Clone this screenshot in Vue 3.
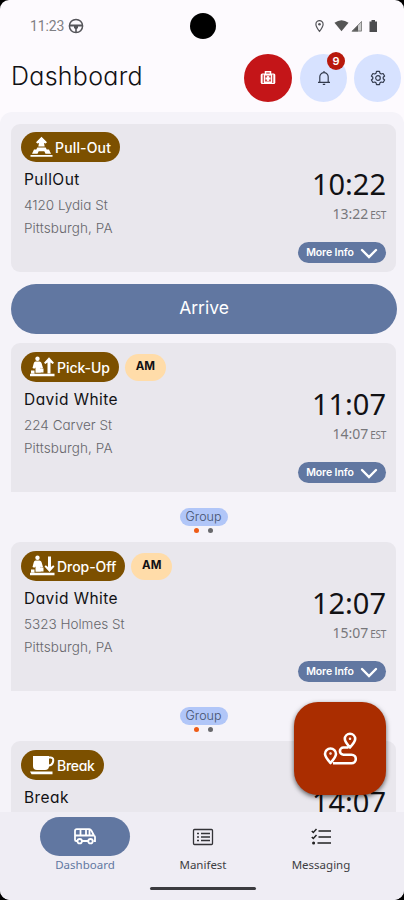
<script setup>
const stops = [
  { kind: 'pull', chip: 'Pull-Out', title: 'PullOut', lines: ['4120 Lydia St', 'Pittsburgh, PA'], time: '10:22', local: '13:22', arrive: true },
  { kind: 'up', chip: 'Pick-Up', tag: 'AM', title: 'David White', lines: ['224 Carver St', 'Pittsburgh, PA'], time: '11:07', local: '14:07', group: true },
  { kind: 'down', chip: 'Drop-Off', tag: 'AM', title: 'David White', lines: ['5323 Holmes St', 'Pittsburgh, PA'], time: '12:07', local: '15:07', group: true },
  { kind: 'break', chip: 'Break', title: 'Break', lines: [], time: '14:07' }
]
</script>

<template>
  <div class="screen">
    <header class="status">
      <div class="clock">11:23
        <svg width="16" height="16" viewBox="0 0 16 16" fill="none" stroke="#55555a" stroke-width="1.5">
          <circle cx="8" cy="8" r="6.6" /><path d="M1.5 7.200H14.500" /><path d="M2 8.500H6V10L7.200 11V14.500H8.800V11L10 10V8.500H14V7H2Z" fill="#55555a" stroke="none" />
        </svg>
      </div>
      <div class="camera"></div>
      <svg class="signals" width="64" height="14" viewBox="0 0 64 14">
        <path d="M4.5 12.3C2.4 9.6.9 7.3.9 5.2a3.6 3.6 0 0 1 7.2 0c0 2.1-1.5 4.400-3.600 7.100Z" fill="none" stroke="#55555a" stroke-width="1.2" /><circle cx="4.500" cy="5.200" r="1.300" fill="#55555a" />
        <path d="M19.500 3.700q7-5 14 0L26.500 12.300Z" fill="#555" />
        <path d="M47 1.800V12.500H36.500Z" fill="#ccc" /><path d="M43 5.900V12.500H36.500Z" fill="#555" /><path d="M46.500 2.500V12H37.500Z" fill="none" stroke="#777" stroke-width=".8" />
        <path d="M54.500 2.500h2V1h3.500v1.500h2V13h-7.500Z" fill="#4c4c4f" />
      </svg>
    </header>

    <div class="heading">
      <h1>Dashboard</h1>
      <button class="round alert">
        <svg width="16" height="16" viewBox="0 0 16 16"><path d="M5.500 4V1.800h5V4" fill="none" stroke="#fff" stroke-width="1.500" /><rect x=".7" y="3.400" width="14.600" height="10.600" rx="1.500" fill="#fff" /><path d="M3.200 4.500v8.500M12.800 4.500v8.500" stroke="#c41518" stroke-width="1" /><rect x="5" y="5.500" width="6" height="6" fill="#c41518" opacity=".75" /><path d="M8 6v5M5.500 8.500h5" stroke="#fff" stroke-width="1.800" /></svg>
      </button>
      <button class="round">
        <svg width="14" height="16" viewBox="0 0 14 16" fill="none" stroke="#333b4d" stroke-width="1.200"><path d="M7 1v1.300M1 12.300h12M2.800 12V6.800a4.200 4.200 0 0 1 8.400 0V12M5.800 14.300h2.400" /></svg>
        <span class="badge">9</span>
      </button>
      <button class="round">
        <svg width="16" height="16" viewBox="0 0 16 16" fill="none" stroke="#333b4d" stroke-width="1.200" stroke-linejoin="round"><path d="M6.500 1.400h3l.5 1.900 1.200.7 1.900-.5 1.500 2.500-1.400 1.300v1.400l1.400 1.300-1.500 2.500-1.900-.5-1.200.7-.5 1.900h-3L6 12.700 4.800 12l-1.900.5L1.400 10l1.400-1.300V7.300L1.400 6l1.500-2.500 1.900.5L6 3.300Z" /><circle cx="8" cy="8" r="2.300" /></svg>
      </button>
    </div>

    <main class="feed">
      <template v-for="(s, i) in stops" :key="i">
        <section class="card" :class="{ joined: s.group, last: s.kind === 'break' }">
          <div class="chips">
            <span class="chip" :class="s.kind">
              <svg v-if="s.kind === 'pull'" width="23" height="22" viewBox="0 0 23 22" fill="#fff"><path d="M11.500.8 17 6.200l-1.300 1.300-1.700-.6.700 3.600h-6.400l.7-3.600-1.700.6L6 6.200Z" /><path d="M7.300 11.500h8.400l1 2h2.300l2 4.300h-5.500l-1.200-2.500H8.700l-1.200 2.500H2l2-4.300h2.300Z" /><path d="M.5 19h22v1.700H.5Z" /></svg>
              <svg v-else-if="s.kind === 'break'" width="25" height="22" viewBox="0 0 25 22" fill="#fff"><path d="M3 2h16v10q0 4-4 4H7q-4 0-4-4Z" /><path d="M18 3.500h2.800q3 0 2.300 4t-5.100 4.200" fill="none" stroke="#fff" stroke-width="2" /><path d="M0 17.500h22.500v2.800H1.500Z" /></svg>
              <svg v-else width="25" height="22" viewBox="0 0 25 22" fill="#fff"><circle cx="7.500" cy="2.800" r="2.200" /><path d="M5.500 5.500h4q1.500 0 2 1.500l1.500 5-1.800.8-.7-1.300v5.300h-5V11.500l-1.200 1.300L2.500 12l1.200-4.500Q4.200 5.500 5.500 5.500Z" /><path d="M0 17.800h24.500v2.400H0ZM1 14.500h3.500v3H1ZM10 12.500h3.500v4H10Z" /><path v-if="s.kind === 'up'" d="m19 1.300 5 5.500-1.300 1.200-2.200-1.600V17.500h-3V6.400L15.300 8 14 6.800Z" /><path v-else d="m19.500 17 5-5.500-1.300-1.200-2.200 1.600V1.500h-3v10.400l-2.200-1.600-1.300 1.200Z" /></svg>
              <b>{{ s.chip }}</b>
            </span>
            <span v-if="s.tag" class="tag">{{ s.tag }}</span>
          </div>
          <div class="body">
            <div class="place">
              <h2>{{ s.title }}</h2>
              <p v-for="l in s.lines" :key="l">{{ l }}</p>
            </div>
            <div class="when">
              <div class="time">{{ s.time }}</div>
              <div v-if="s.local" class="local">{{ s.local }}<small>EST</small></div>
              <button v-if="s.local" class="more">More Info
                <svg width="18" height="11" viewBox="0 0 18 11" fill="none" stroke="#fff" stroke-width="2.400" stroke-linecap="round"><path d="m2 2 7 7 7-7" /></svg>
              </button>
            </div>
          </div>
        </section>
        <button v-if="s.arrive" class="arrive">Arrive</button>
        <div v-if="s.group" class="group">
          <span>Group</span>
          <div class="dots"><i></i><i></i></div>
        </div>
      </template>
    </main>

    <button class="route">
      <svg width="34" height="34" viewBox="0 0 34 34" fill="none" stroke="#fff" stroke-width="2.600" stroke-linejoin="round"><path d="M7.500 31C4 27 2 24.500 2 22a5.500 5.500 0 0 1 11 0c0 2.500-2 5-5.500 9ZM27 15.500c-3.500-4-5.200-6.200-5.200-8.500a5.200 5.200 0 0 1 10.400 0c0 2.300-1.700 4.500-5.200 8.500ZM25.500 15.500h-5a3.600 3.600 0 0 0 0 7.200h8a4.300 4.300 0 0 1 0 8.600H10" /><circle cx="7.500" cy="21.500" r=".5" stroke-width="1.500" /><circle cx="27" cy="6.800" r=".5" stroke-width="1.500" /></svg>
    </button>

    <nav class="nav">
      <div class="item active">
        <span class="pill"><svg width="22" height="17" viewBox="0 0 22 17" fill="none" stroke="#fff" stroke-width="1.800"><path d="M3.500 13H2.300q-1.300 0-1.300-1.300V3q0-1.800 1.800-1.800h12.500q1.300 0 2 1.200L20 7.500q1 .6 1 1.600V13h-1.500M8 13h6M1 7.500h19M6.500 1.500v6M12 1.500v6M15.500 1.500v6" /><circle cx="5.700" cy="13.200" r="2.200" /><circle cx="16.500" cy="13.200" r="2.200" /></svg></span>
        <label>Dashboard</label>
      </div>
      <div class="item">
        <span class="pill"><svg width="22" height="18" viewBox="0 0 22 18" fill="none" stroke="#333337" stroke-width="1.300"><rect x="1.500" y="1.500" width="19" height="15" rx="1" /><path d="M5 5.500h2M5 9h2M5 12.500h2M9 5.500h9M9 9h9M9 12.500h9" /></svg></span>
        <label>Manifest</label>
      </div>
      <div class="item">
        <span class="pill"><svg width="20" height="17" viewBox="0 0 20 17" fill="none" stroke="#222" stroke-width="1.500"><path d="M7.500 3H20M7.500 9H20M6.500 15H20M.8 3l1.500 1.500L5.500 1M.8 9l1.500 1.500L5.500 7" /><circle cx="2.600" cy="15" r=".8" /></svg></span>
        <label class="wide">Messaging</label>
      </div>
      <div class="homebar"></div>
    </nav>
  </div>
</template>

<style>
body { margin: 0; background: #000; }
</style>

<style scoped>
* { box-sizing: border-box; }
.screen { position: relative; width: 404px; height: 900px; overflow: hidden; display: flex; flex-direction: column; background: #fdfafe; border-radius: 9px 9px 10px 10px; font-family: Inter, "Noto Sans", sans-serif; font-feature-settings: "cv11"; color: #111114; }
button { border: 0; padding: 0; font: inherit; font-feature-settings: inherit; display: flex; align-items: center; justify-content: center; }
h1, h2, p { margin: 0; font-weight: 400; }
.status { height: 52px; flex: none; display: grid; grid-template-columns: 160px 26px 1fr; align-items: center; padding: 0 25px 0 30px; }
.clock { display: flex; align-items: center; gap: 4px; font: 14px/20px Roboto, sans-serif; letter-spacing: -.1px; color: #808084; }
.camera { width: 26px; height: 26px; border-radius: 50%; background: #000; }
.signals { justify-self: end; }
.heading { height: 60px; flex: none; display: flex; align-items: center; padding: 0 3px 8px 11px; gap: 7px; }
h1 { flex: 1; font-size: 25px; font-weight: 300; line-height: 34px; padding-bottom: 4px; letter-spacing: .3px; }
.round { position: relative; flex: none; width: 47px; height: 48px; border-radius: 50%; background: #d7e2ff; }
.alert { width: 48px; margin-right: 1px; background: #c41518; }
.badge { position: absolute; left: 27px; top: -2px; width: 18px; height: 18px; border-radius: 50%; background: #b8190c; color: #fff; font-size: 11px; font-weight: 600; line-height: 18px; text-align: center; }
.feed { height: 700px; flex: none; overflow: hidden; background: #f5f3f9; border-radius: 12px 12px 0 0; padding: 12px 8px 0 11px; display: flex; flex-direction: column; }
.card { flex: none; height: 148px; border-radius: 9px; background: #e9e7ed; padding: 8px 10px 0; }
.joined { height: 149px; border-radius: 9px 9px 0 0; padding-top: 9px; }
.last { padding-top: 9px; }
.chips { display: flex; align-items: center; gap: 6px; height: 30px; }
.chip { height: 30px; border-radius: 15px; background: #7c5000; color: #fff; display: flex; align-items: center; padding: 0 9px; gap: 2px; }
.chip b { font-size: 14px; font-weight: 500; letter-spacing: -.05px; white-space: nowrap; }
.pull b { letter-spacing: .15px; }
.break b { letter-spacing: -.3px; }
.tag { width: 41px; height: 27px; border-radius: 14px; background: #ffdca9; font-size: 11.500px; font-weight: 700; line-height: 25px; text-align: center; }
.body { display: flex; justify-content: space-between; padding-left: 3px; }
.place { padding-top: 6px; }
h2 { font-size: 15.500px; line-height: 24px; letter-spacing: .45px; }
p { font-size: 13.500px; line-height: 23px; font-weight: 300; color: #66666b; letter-spacing: .1px; }
h2 + p { padding-top: 2px; letter-spacing: 0; }
.when { display: flex; flex-direction: column; align-items: flex-end; font-family: "Noto Sans", sans-serif; }
.time { padding-top: 6px; font-size: 29px; line-height: 32px; letter-spacing: 0; }
.local { margin-top: 5px; font-size: 14px; line-height: 18px; color: #77777b; }
.local small { font-size: 10px; margin-left: 2px; letter-spacing: -.3px; }
.more { margin-top: 18px; width: 88px; height: 21px; padding-bottom: 1px; border-radius: 11px; background: #6177a1; color: #fff; font: 600 10.500px Inter, sans-serif; font-feature-settings: "cv11"; letter-spacing: -.1px; gap: 6px; }
.more svg { position: relative; top: 1px; }
.arrive { flex: none; height: 50px; margin: 12px -1px 9px 0; border-radius: 25px; background: #6177a1; color: #fff; font-size: 17.500px; padding-bottom: 4px; }
.group { height: 50px; flex: none; display: flex; flex-direction: column; align-items: center; padding-top: 16px; }
.group span { width: 48px; height: 18px; border-radius: 9px; background: #b1c6f8; font-size: 12.500px; font-weight: 300; line-height: 18px; text-align: center; color: #43506d; }
.dots { display: flex; gap: 9px; padding-top: 2px; }
.dots i { width: 5px; height: 5px; border-radius: 50%; background: #ee5b16; }
.dots i + i { background: #68686c; }
.route { position: absolute; left: 294px; top: 702px; width: 92px; height: 93px; border-radius: 24px; background: #aa2d00; box-shadow: 0 2px 5px rgba(0,0,0,.6); }
.nav { position: relative; height: 88px; flex: none; display: flex; padding: 5px 24px 0 26px; background: #efedf4; }
.item { width: 118px; flex: none; display: flex; flex-direction: column; align-items: center; }
.pill { width: 90px; height: 39px; border-radius: 20px; display: flex; align-items: center; justify-content: center; }
.active .pill { background: #6177a1; }
.item label { font: 11.500px/16px "Noto Sans", sans-serif; margin-top: 1px; color: #3d3d42; }
.active label { color: #6177a1; }
.homebar { position: absolute; left: 150px; bottom: 10px; width: 106px; height: 3px; border-radius: 2px; background: #3b3b3f; }
</style>
